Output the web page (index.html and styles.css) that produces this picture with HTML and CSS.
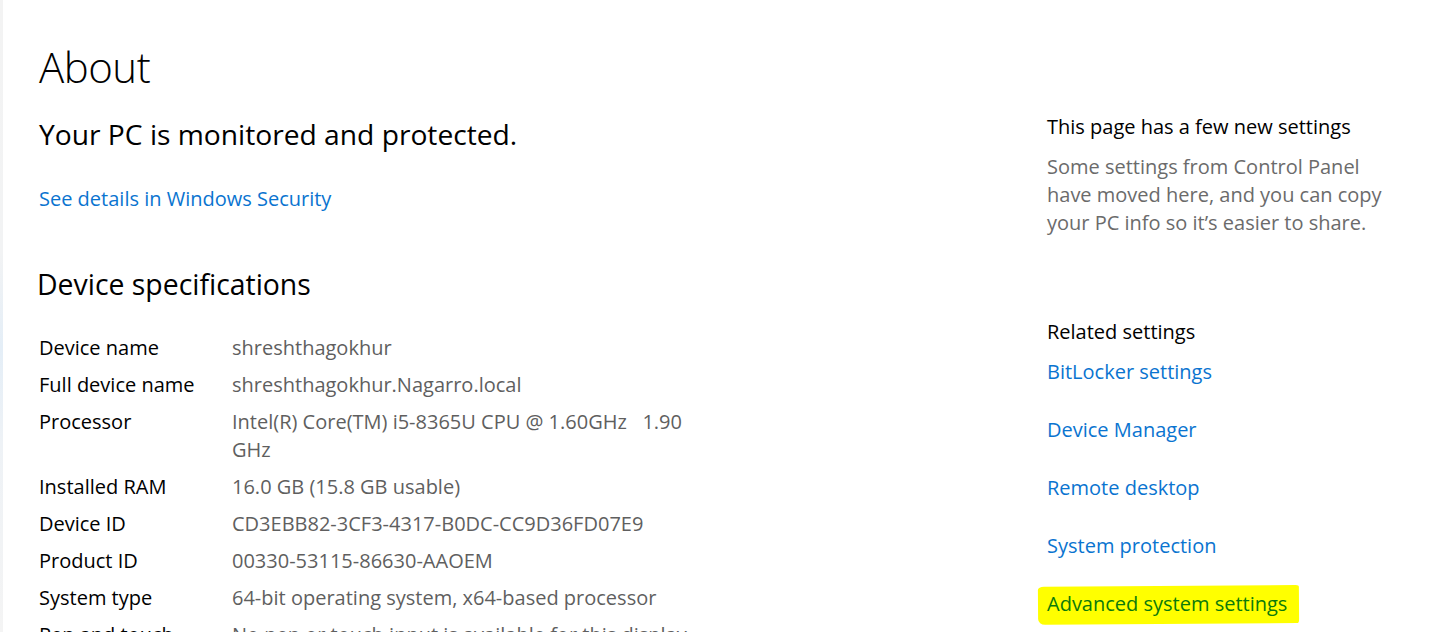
FILE: index.html
```html
<!DOCTYPE html>
<html lang="en">
<head>
<meta charset="utf-8">
<title>About</title>
<link rel="stylesheet" href="styles.css">
</head>
<body>
<div class="window">
  <div class="edge"></div>
  <main class="main">
    <h1 class="title">About</h1>
    <p class="status">Your PC is monitored and protected.</p>
    <a class="link security" href="#">See details in Windows Security</a>
    <h2 class="section">Device specifications</h2>
    <dl class="specs">
      <div class="row"><dt>Device name</dt><dd>shreshthagokhur</dd></div>
      <div class="row"><dt>Full device name</dt><dd>shreshthagokhur.Nagarro.local</dd></div>
      <div class="row"><dt>Processor</dt><dd>Intel(R) Core(TM) i5-8365U CPU @ 1.60GHz&nbsp;&nbsp; 1.90 GHz</dd></div>
      <div class="row"><dt>Installed RAM</dt><dd>16.0 GB (15.8 GB usable)</dd></div>
      <div class="row"><dt>Device ID</dt><dd>CD3EBB82-3CF3-4317-B0DC-CC9D36FD07E9</dd></div>
      <div class="row"><dt>Product ID</dt><dd>00330-53115-86630-AAOEM</dd></div>
      <div class="row"><dt>System type</dt><dd>64-bit operating system, x64-based processor</dd></div>
      <div class="row"><dt>Pen and touch</dt><dd>No pen or touch input is available for this display</dd></div>
    </dl>
  </main>
  <aside class="aside">
    <h3 class="aside-head">This page has a few new settings</h3>
    <p class="aside-text">Some settings from Control Panel have moved here, and you can copy your PC info so it’s easier to share.</p>
    <h3 class="aside-head related">Related settings</h3>
    <ul class="links">
      <li><a class="link" href="#">BitLocker settings</a></li>
      <li><a class="link" href="#">Device Manager</a></li>
      <li><a class="link" href="#">Remote desktop</a></li>
      <li><a class="link" href="#">System protection</a></li>
      <li><a class="link marked" href="#">Advanced system settings</a></li>
    </ul>
  </aside>
</div>
</body>
</html>
```
FILE: styles.css
```css
html, body {
  margin: 0;
  padding: 0;
  background: #ffffff;
  height: 100%;
  overflow: hidden;
}
body {
  font-family: "Open Sans", "Noto Sans", sans-serif;
  color: #000;
}
.window {
  display: flex;
  height: 632px;
}
.edge {
  width: 3px;
  flex: none;
  background: linear-gradient(#f3f3f3 0%, #f2f3f4 40%, #e4eef7 55%, #eef2f6 70%, #f4f4f4 100%);
}
.main {
  flex: none;
  width: 1044px;
  padding: 39px 0 0 36px;
  box-sizing: border-box;
}
.title {
  margin: 0;
  font-weight: 300;
  font-size: 42px;
  line-height: 56px;
  letter-spacing: -0.5px;
}
.status {
  margin: 19px 0 0;
  font-size: 28.2px;
  line-height: 40px;
  font-weight: 400;
}
.link {
  color: #0a74d0;
  text-decoration: none;
  font-size: 20px;
  line-height: 28px;
}
.security {
  display: block;
  margin-top: 31px;
}
.section {
  margin: 51px 0 0 -2px;
  font-weight: 400;
  font-size: 28.4px;
  line-height: 40px;
}
.specs {
  margin: 30px 0 0;
  display: flex;
  flex-direction: column;
  gap: 9px;
}
.row {
  display: flex;
  font-size: 20px;
  line-height: 28px;
}
.row dt {
  width: 193px;
  flex: none;
  color: #000;
}
.row dd {
  margin: 0;
  width: 470px;
  color: #5f5f5f;
}
.aside {
  flex: none;
  width: 360px;
  padding-top: 113px;
}
.aside-head {
  margin: 0;
  font-weight: 400;
  font-size: 20px;
  line-height: 28px;
}
.aside-text {
  margin: 12px 0 0;
  width: 340px;
  font-size: 20px;
  line-height: 28px;
  color: #6b6b6b;
}
.related {
  margin-top: 81px;
}
.links {
  list-style: none;
  margin: 12px 0 0;
  padding: 0;
  display: flex;
  flex-direction: column;
  gap: 30px;
}
.links li {
  height: 28px;
}
.marked {
  position: relative;
  z-index: 0;
  display: inline-block;
  color: #0b7a0b;
}
.marked::before {
  content: "";
  position: absolute;
  left: -9px;
  right: -12px;
  top: -4px;
  bottom: -6px;
  background: #ffff00;
  border-radius: 6px 3px 2px 7px / 3px 2px 4px 6px;
  transform: rotate(-0.4deg);
  z-index: -1;
}
```
